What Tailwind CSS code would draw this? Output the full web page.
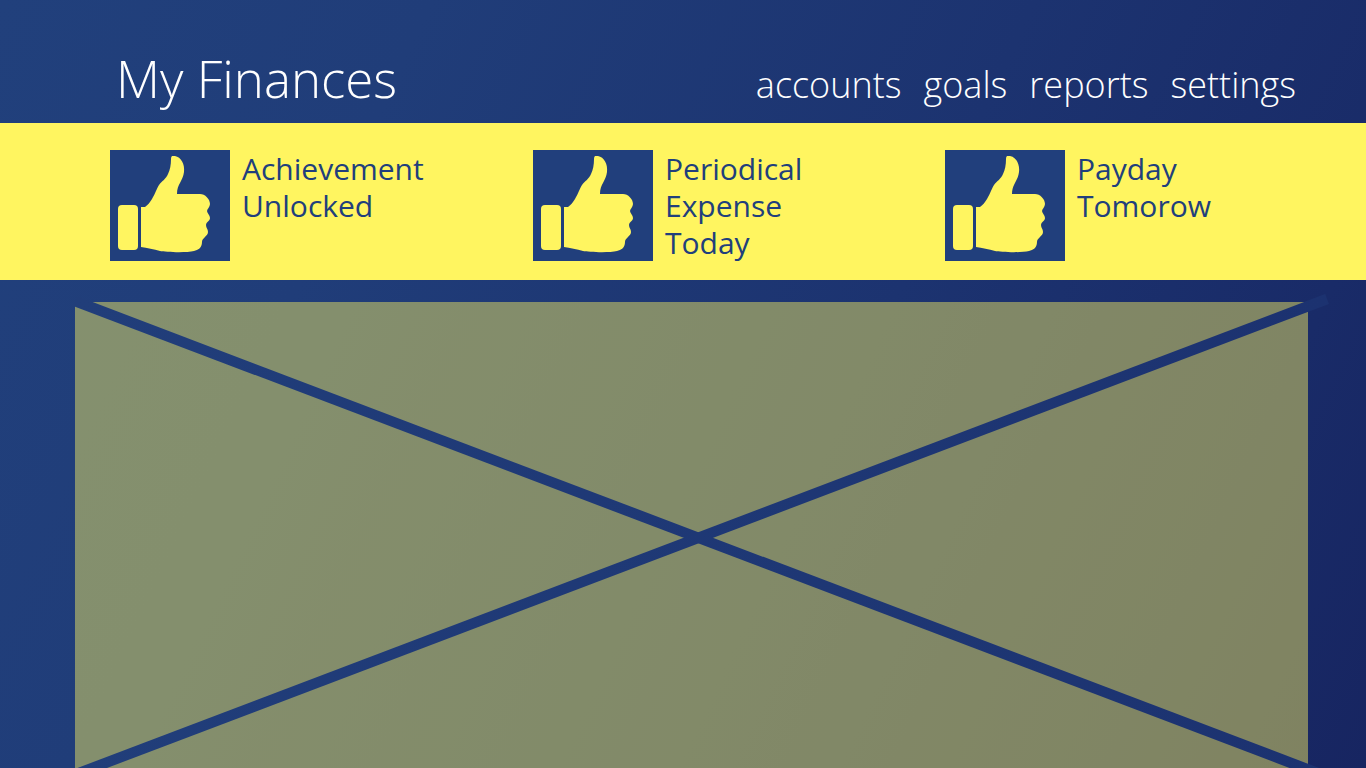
<!DOCTYPE html>
<html lang="en">
<head>
<meta charset="utf-8">
<meta name="viewport" content="width=device-width, initial-scale=1">
<title>My Finances</title>
<script src="https://cdn.jsdelivr.net/npm/@tailwindcss/browser@4"></script>
</head>
<body class="flex min-h-screen flex-col overflow-x-hidden bg-linear-[115deg,#21407c_0%,#203d79_25%,#1c3370_60%,#192b68_85%,#172561_100%] font-['Open_Sans','Noto_Sans',sans-serif]">
  <svg class="hidden" aria-hidden="true">
    <symbol id="thumb" viewBox="0 0 120 111">
      <rect x="8" y="55" width="20" height="45" rx="4"/>
      <path d="M31 57H35C38 55 40 52 42 49C45 44 47 38 49 35C52 31 56 29 58 24C60 20 61 15 61 9C61 5 63 6 65 6C71 7 75 14 74 22C73 31 67 34 67 44H90C95 44 100 49 100 54C100 57 97 59 97 61C97 63 100 65 100 68C100 71 96 72 96 75C96 78 98 79 98 82C98 86 92 88 92 92C92 98 88 100 84 101C76 103 55 102 50 101C44 99 37 98 31 97Z"/>
    </symbol>
  </svg>
  <header class="flex h-[123px] items-baseline justify-between pt-[38px] pr-[70px] pl-[116px] text-white">
    <h1 class="text-[51px] leading-[80px] font-light whitespace-nowrap">My Finances</h1>
    <nav aria-label="Main" class="flex gap-[22px] text-[36px] leading-[56px] font-light">
      <a href="#accounts">accounts</a>
      <a href="#goals">goals</a>
      <a href="#reports">reports</a>
      <a href="#settings">settings</a>
    </nav>
  </header>
  <ul class="grid h-[157px] grid-cols-[423fr_412fr_311fr] bg-[#fff560] pt-[27px] pr-[110px] pl-[110px] text-[30px] leading-[37px] text-[#213f7c]">
    <li class="flex items-start gap-3">
      <svg class="h-[111px] w-[120px] shrink-0 bg-[#213f7c] fill-[#fff560]" aria-hidden="true"><use href="#thumb"/></svg>
      <p>Achievement<br>Unlocked</p>
    </li>
    <li class="flex items-start gap-3">
      <svg class="h-[111px] w-[120px] shrink-0 bg-[#213f7c] fill-[#fff560]" aria-hidden="true"><use href="#thumb"/></svg>
      <p>Periodical<br>Expense<br>Today</p>
    </li>
    <li class="flex items-start gap-3">
      <svg class="h-[111px] w-[120px] shrink-0 bg-[#213f7c] fill-[#fff560]" aria-hidden="true"><use href="#thumb"/></svg>
      <p>Payday<br>Tomorow</p>
    </li>
  </ul>
  <main class="flex flex-1 overflow-hidden pt-[22px] pr-[58px] pl-[75px]">
    <div class="relative min-h-[466px] flex-1 bg-[#fff560]/45">
      <svg class="absolute inset-0 size-full overflow-visible" viewBox="0 0 1233 466" preserveAspectRatio="none" role="img" aria-label="Content placeholder">
        <defs>
          <linearGradient id="bar" gradientUnits="userSpaceOnUse" x1="0" y1="0" x2="1253" y2="0">
            <stop offset="0" stop-color="#213e7a"/>
            <stop offset="1" stop-color="#1c3270"/>
          </linearGradient>
        </defs>
        <g stroke="url(#bar)" stroke-width="10.5">
          <path d="M0 -1L1253 475"/>
          <path d="M-17 479L1252 -3"/>
        </g>
      </svg>
    </div>
  </main>
</body>
</html>
